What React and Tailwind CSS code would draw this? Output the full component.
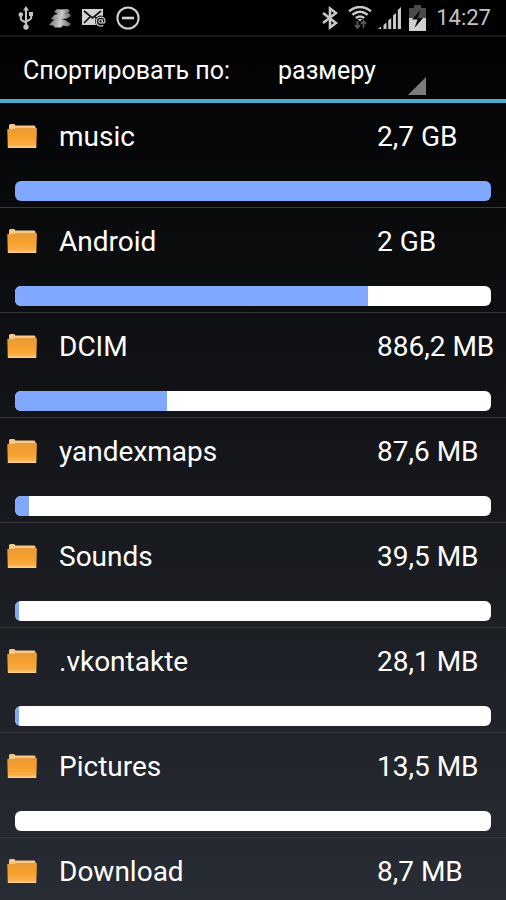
import { useState } from "react";

const FOLDERS = [
  { name: "music", size: "2,7 GB", share: 100 },
  { name: "Android", size: "2 GB", share: 74.2 },
  { name: "DCIM", size: "886,2 MB", share: 32 },
  { name: "yandexmaps", size: "87,6 MB", share: 3 },
  { name: "Sounds", size: "39,5 MB", share: 0.9 },
  { name: ".vkontakte", size: "28,1 MB", share: 0.9 },
  { name: "Pictures", size: "13,5 MB", share: 0 },
  { name: "Download", size: "8,7 MB", share: 0 },
];

function UsbIcon() {
  return (
    <svg className="h-6 w-4" viewBox="0 0 16 24" fill="none" stroke="#c4c4c4" strokeWidth="2" aria-hidden="true">
      <path d="M8 3v17M2.8 9v3.500q0 1.500 1.400 2.100L8 16.500M13.200 8v3.500q0 1.500-1.400 2.100L8 15.500" />
      <path d="M8 0l3 4.500H5zM11 6h4v4h-4z" fill="#c4c4c4" stroke="none" />
      <circle cx="2.800" cy="8.600" r="2.300" fill="#c4c4c4" stroke="none" />
      <circle cx="8" cy="21" r="2.700" fill="#c4c4c4" stroke="none" />
    </svg>
  );
}

function LayersIcon() {
  return (
    <svg className="h-5 w-6" viewBox="0 0 24 20" aria-hidden="true">
      <defs>
        <linearGradient id="layer" x1="0" y1="0" x2="1" y2="0">
          <stop offset="0" stopColor="#777" />
          <stop offset="0.500" stopColor="#ccc" />
          <stop offset="1" stopColor="#666" />
        </linearGradient>
      </defs>
      <g fill="url(#layer)">
        <path d="M1 17l3.500-4Q11 9.500 17 12l6 4-3 2.500-5-1-2 2H7l-2-2z" />
        <path d="M3 11l3-4q6-2 9-1l6-1 2 3-4 2.500-5 .500-5 2z" />
        <path d="M6 4l3-3 4 .500L20 1l2 2.500-4 2-6 1.500z" />
      </g>
    </svg>
  );
}

function MailIcon() {
  return (
    <svg className="h-5 w-6" viewBox="0 0 24 20" aria-hidden="true">
      <path d="M0 1h21v16H0z" fill="#d2d2d2" />
      <path d="M2 3l8.500 7L19 3M2 15l6-6M13 9l3 3" stroke="#111" strokeWidth="1.700" fill="none" />
      <circle cx="18.800" cy="13.400" r="5.800" fill="#000" />
      <g fill="none" stroke="#c4c4c4" strokeWidth="1.300">
        <circle cx="18.600" cy="13.400" r="1.800" />
        <path d="M20.400 11.500v2.300q0 1.400 1.200 1.300 1.300-.200 1.300-2.200-.200-3.800-4.200-3.800-4.300.200-4.400 4.500.100 4.400 4.400 4.500 1.400 0 2.600-.700" />
      </g>
    </svg>
  );
}

function BlockIcon() {
  return (
    <svg className="h-6 w-6" viewBox="0 0 24 24" fill="none" stroke="#d2d2d2" aria-hidden="true">
      <circle cx="12" cy="12" r="10.600" strokeWidth="2" />
      <path d="M6 12h12" strokeWidth="2.600" />
    </svg>
  );
}

function BluetoothIcon() {
  return (
    <svg className="h-6 w-4" viewBox="0 0 16 24" fill="none" stroke="#c8c8c8" strokeWidth="2.600" aria-hidden="true">
      <path d="M1 7l13 10-6 4.500v-19L14 7 1 17" />
    </svg>
  );
}

function WifiIcon() {
  return (
    <svg className="h-6 w-6" viewBox="0 0 24 24" fill="none" aria-hidden="true">
      <g stroke="#c8c8c8" strokeWidth="2.400">
        <path d="M1 5.200q11-8.600 22 0" />
        <path d="M4.400 8.800q7.600-6 15.200 0" />
        <path d="M7.800 12q4.200-3.200 8.400 0" />
      </g>
      <path d="M9.500 13h5L12 15.500z" fill="#c8c8c8" />
      <path d="M9.500 15v7M7 19l2.500 3 2.500-3M15.500 22v-7M13 18l2.500-3 2.500 3" stroke="#5c5c5c" strokeWidth="1.700" />
    </svg>
  );
}

function SignalIcon() {
  return (
    <svg className="h-6 w-6" viewBox="0 0 24 24" fill="#c8c8c8" aria-hidden="true">
      <path d="M0 23l3-2.500V23zM5.500 19l3-2.500V23h-3zM10.200 14.500l3-2.500v11h-3zM15 9.500L18 7v16h-3zM19.800 4L23 1v22h-3.200z" />
    </svg>
  );
}

function BatteryIcon() {
  return (
    <svg className="h-7 w-5" viewBox="0 0 20 28" aria-hidden="true">
      <path d="M6 1h7v3h5v11H1V4h5z" fill="#4a4a4a" />
      <path d="M1 14h17v13H1z" fill="#d0d0d0" />
      <path d="M12.500 6L4 15.500h5.500L6.500 24 15 14H9.800z" fill="#0a0a0a" />
    </svg>
  );
}

function FolderIcon() {
  return (
    <svg className="h-6 w-8 shrink-0" viewBox="0 0 32 24" aria-hidden="true">
      <defs>
        <linearGradient id="folder-front" x1="0" y1="0" x2="0" y2="1">
          <stop offset="0" stopColor="#e89a38" />
          <stop offset="0.500" stopColor="#f6a12c" />
          <stop offset="0.850" stopColor="#f8ae48" />
          <stop offset="1" stopColor="#ffd596" />
        </linearGradient>
      </defs>
      <path d="M3 6V1.500Q3 0 4.500 0H8q1 0 1.300 1.500H28q1.500 0 1.500 1.500v3H3z" fill="#f8c887" />
      <path d="M1.300 5H8l1.600-1H30q1 0 .900 1L30.300 24H1.800z" fill="url(#folder-front)" />
    </svg>
  );
}

function StatusBar() {
  return (
    <div className="flex h-[37px] shrink-0 items-center justify-between border-b-2 border-[#171919] bg-black pr-[15px] pl-[18px]">
      <div className="flex items-center gap-[14px]">
        <UsbIcon />
        <div className="flex items-center gap-[10px]">
          <LayersIcon />
          <MailIcon />
          <BlockIcon />
        </div>
      </div>
      <div className="flex items-center gap-[6px]">
        <div className="mr-1">
          <BluetoothIcon />
        </div>
        <WifiIcon />
        <SignalIcon />
        <BatteryIcon />
        <time className="ml-[2px] text-[22px] leading-8 text-[#c4c4c4]">14:27</time>
      </div>
    </div>
  );
}

function SortBar({ value, onChange }) {
  return (
    <div className="flex h-[66px] shrink-0 items-center border-b-4 border-[#4aaccd] pl-[23px]">
      <label htmlFor="sort" className="pt-[6px] text-[25px] leading-8">
        Спортировать по:
      </label>
      <div className="relative ml-[48px] h-full w-[148px]">
        <select
          id="sort"
          value={value}
          onChange={(event) => onChange(event.target.value)}
          className="h-full w-full appearance-none bg-transparent pt-[6px] text-[25px] text-white"
        >
          <option value="size">размеру</option>
          <option value="name">имени</option>
        </select>
        <svg className="pointer-events-none absolute right-0 bottom-1 h-[18px] w-[18px]" viewBox="0 0 18 18" aria-hidden="true">
          <path d="M18 0v18H0z" fill="#7c7c7c" />
        </svg>
      </div>
    </div>
  );
}

function FolderRow({ folder }) {
  return (
    <li className="border-b border-[#34373b] pb-[6px]">
      <div className="flex h-[78px] items-start pt-[18px] pl-[6px]">
        <div className="pt-[3px]">
          <FolderIcon />
        </div>
        <span className="min-w-0 flex-1 truncate pl-[21px] text-[28px] leading-8">{folder.name}</span>
        <span className="w-[129px] shrink-0 text-[28px] leading-8 whitespace-nowrap">{folder.size}</span>
      </div>
      <div
        role="progressbar"
        aria-label={folder.name}
        aria-valuenow={folder.share}
        className="mx-[15px] h-5 overflow-hidden rounded-md bg-white"
      >
        <div className="h-full bg-[#80a8ff]" style={{ width: `${folder.share}%` }} />
      </div>
    </li>
  );
}

export default function App() {
  const [sort, setSort] = useState("size");

  const folders =
    sort === "name" ? [...FOLDERS].sort((a, b) => a.name.localeCompare(b.name)) : FOLDERS;

  return (
    <div className="flex h-screen flex-col overflow-hidden bg-linear-to-b/srgb from-black to-[#282c34] font-[Roboto,sans-serif] text-white">
      <StatusBar />
      <SortBar value={sort} onChange={setSort} />
      <ul className="min-h-0 flex-1 overflow-y-auto [scrollbar-width:none]">
        {folders.map((folder) => (
          <FolderRow key={folder.name} folder={folder} />
        ))}
      </ul>
    </div>
  );
}
